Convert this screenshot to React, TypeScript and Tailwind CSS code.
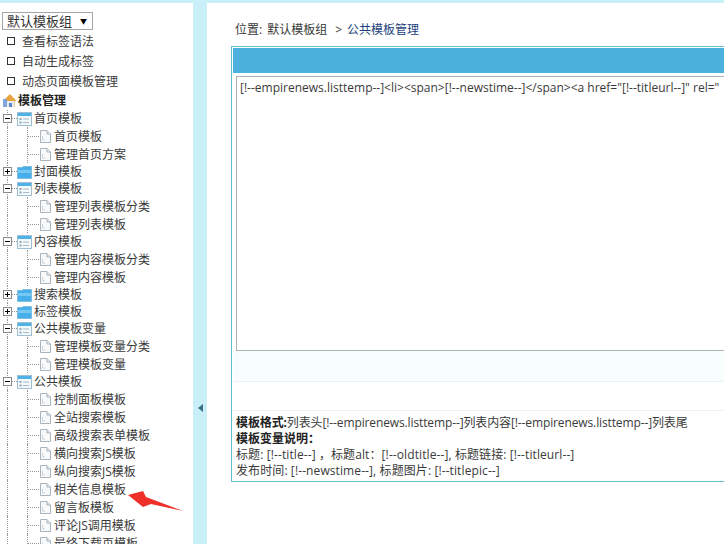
const font = { fontFamily: '"Open Sans", "Noto Sans CJK SC", sans-serif' }

function PageIcon() {
  return (
    <svg width="13" height="15" viewBox="0 0 13 15" className="shrink-0">
      <path d="M1.5 1.5 H8 L11.5 5 V13.5 H1.5 Z" fill="#f7f9fb" stroke="#a9b4bd" />
      <path d="M8 1.5 V5 H11.5" fill="#e2e8ec" stroke="#a9b4bd" />
      <path d="M3.5 7 V11 H6" fill="none" stroke="#ccd4da" />
    </svg>
  )
}

function OpenFolder() {
  return (
    <svg width="15" height="14" viewBox="0 0 15 14" className="shrink-0">
      <rect x="0.5" y="0.5" width="14" height="13" fill="#f4f9fc" stroke="#9fc0d4" />
      <rect x="1" y="1" width="13" height="3" fill="#4fb2e6" />
      <rect x="2.5" y="6" width="2" height="2" fill="#8fa6b8" />
      <rect x="2.5" y="9.5" width="2" height="2" fill="#8fa6b8" />
      <path d="M6 7 H12 M6 10.5 H12" stroke="#a9bac6" />
    </svg>
  )
}

function ClosedFolder() {
  return (
    <svg width="15" height="14" viewBox="0 0 15 14" className="shrink-0">
      <path d="M0.5 2.5 V13.5 H14.5 V1.5 H6 L5 2.5 Z" fill="#46aeea" stroke="#7fbde0" />
      <rect x="1" y="5" width="13" height="3" fill="#75c8f2" />
    </svg>
  )
}

function HomeIcon() {
  return (
    <svg width="15" height="15" viewBox="0 0 15 15" className="shrink-0">
      <path d="M8 1 L14.5 8 H12.5 V14 H3 V8 H1 Z" fill="#e8a33c" />
      <rect x="1" y="6" width="4" height="8" fill="#7fa6d8" />
      <rect x="5" y="8" width="7" height="6" fill="#e6ecf3" />
      <rect x="7" y="10" width="3" height="4" fill="#5a86c4" />
    </svg>
  )
}

function Expander({ open }: { open: boolean }) {
  return (
    <span className="relative w-[9px] h-[9px] border border-[#8a8a8a] bg-white shrink-0 z-10">
      <span className="absolute left-[1px] top-[3px] w-[5px] h-px bg-black" />
      {!open && <span className="absolute left-[3px] top-[1px] w-px h-[5px] bg-black" />}
    </span>
  )
}

function GroupRow({ label, open }: { label: string; open: boolean }) {
  return (
    <div className="flex items-center h-[17px]">
      <div className="relative flex items-center w-[17px] h-full pl-[3px] shrink-0">
        <span className="absolute left-[7px] top-0 bottom-0 border-l border-dotted border-[#999]" />
        <span className="absolute left-[12px] top-[8px] w-[5px] border-t border-dotted border-[#999]" />
        <Expander open={open} />
      </div>
      <span className="shrink-0 w-[17px]">{open ? <OpenFolder /> : <ClosedFolder />}</span>
      <span className="text-[#3a3a3a]">{label}</span>
    </div>
  )
}

function LeafRow({ label }: { label: string }) {
  return (
    <div className="flex items-center h-[18px]">
      <div className="relative w-[27px] h-full border-l border-dotted border-[#999] ml-[7px] shrink-0" />
      <div className="relative w-[12px] h-full shrink-0 -ml-[7px] mr-[7px]">
        <span className="absolute left-0 top-0 h-full border-l border-dotted border-[#999]" />
        <span className="absolute left-0 top-[9px] w-[12px] border-t border-dotted border-[#999]" />
      </div>
      <span className="-ml-[7px] w-[15px] shrink-0">
        <PageIcon />
      </span>
      <span className="text-[#3a3a3a] whitespace-nowrap">{label}</span>
    </div>
  )
}

const tree: { label: string; open: boolean; items: string[] }[] = [
  { label: '首页模板', open: true, items: ['首页模板', '管理首页方案'] },
  { label: '封面模板', open: false, items: [] },
  { label: '列表模板', open: true, items: ['管理列表模板分类', '管理列表模板'] },
  { label: '内容模板', open: true, items: ['管理内容模板分类', '管理内容模板'] },
  { label: '搜索模板', open: false, items: [] },
  { label: '标签模板', open: false, items: [] },
  { label: '公共模板变量', open: true, items: ['管理模板变量分类', '管理模板变量'] },
  {
    label: '公共模板',
    open: true,
    items: [
      '控制面板模板',
      '全站搜索模板',
      '高级搜索表单模板',
      '横向搜索JS模板',
      '纵向搜索JS模板',
      '相关信息模板',
      '留言板模板',
      '评论JS调用模板',
      '最终下载页模板',
    ],
  },
]

const links = ['查看标签语法', '自动生成标签', '动态页面模板管理']

export default function App() {
  return (
    <div
      className="relative w-[724px] h-[544px] overflow-hidden flex bg-white text-[12px] leading-[17px] text-[#3a3a3a]"
      style={font}
    >
      {/* Sidebar */}
      <div className="w-[193px] shrink-0 border-t-[3px] border-[#c9eff9] overflow-hidden">
        <div className="pl-[2px] pt-[9px]">
          <div className="flex items-center justify-between w-[91px] h-[18px] border border-[#a5a5a5] pl-[4px] pr-[5px] text-[13px] text-[#333]">
            <span>默认模板组</span>
            <span className="text-[7px] text-black">▼</span>
          </div>
        </div>
        <div className="flex flex-col mt-[1px]">
          {links.map((l) => (
            <div key={l} className="flex items-center h-[20px] pl-[7px]">
              <span className="w-[8px] h-[8px] border border-[#333] mr-[7px] shrink-0" />
              <span>{l}</span>
            </div>
          ))}
        </div>
        <div className="flex items-center h-[18px] pl-[2px] font-bold text-[#222]">
          <HomeIcon />
          <span className="ml-[1px]">模板管理</span>
        </div>
        <div className="flex flex-col mt-[1px]">
          {tree.map((g) => (
            <div key={g.label} className="flex flex-col">
              <GroupRow label={g.label} open={g.open} />
              {g.items.map((item) => (
                <LeafRow key={item} label={item} />
              ))}
            </div>
          ))}
        </div>
      </div>

      {/* Collapse strip */}
      <div className="w-[14px] shrink-0 bg-[#c9eff9] flex items-center justify-center pt-[272px]">
        <span className="w-0 h-0 border-y-[4px] border-y-transparent border-r-[5px] border-r-[#3f6f8a]" />
      </div>

      {/* Main */}
      <div className="flex-1 min-w-0 border-t-[3px] border-[#c9eff9] overflow-hidden">
        <div className="pl-[28px] pt-[18px] h-[43px] whitespace-nowrap">
          <span>位置:</span>
          <span className="ml-[5px]">默认模板组</span>
          <span className="ml-[8px]">&gt;</span>
          <span className="ml-[5px] text-[#1c3f7c]">公共模板管理</span>
        </div>
        <div className="ml-[24px] w-[600px] h-[436px] border border-[#5fc0d2] p-px flex flex-col">
          <div className="h-[25px] bg-[#4cb1dd] shrink-0" />
          <div className="px-[3px] pt-[3px] bg-white shrink-0">
            <div className="h-[275px] border border-[#aab2b6] pl-[3px] pt-[2px] whitespace-nowrap overflow-hidden">
              {'[!--empirenews.listtemp--]<li><span>[!--newstime--]</span><a href="[!--titleurl--]" rel="'}
            </div>
          </div>
          <div className="h-[31px] bg-[#f8fdfd] border-b border-[#e9f3f3] shrink-0" />
          <div className="h-[29px] bg-white border-b border-[#e9f3f3] shrink-0" />
          <div className="pl-[3px] pt-[4px] leading-[16px] whitespace-nowrap">
            <div className="tracking-[-0.12px]">
              <b className="text-[#222]">模板格式:</b>列表头[!--empirenews.listtemp--]列表内容[!--empirenews.listtemp--]列表尾
            </div>
            <div>
              <b className="text-[#222]">模板变量说明：</b>
            </div>
            <div className="tracking-[0.1px]">标题: [!--title--] ，标题alt：[!--oldtitle--], 标题链接: [!--titleurl--]</div>
            <div className="tracking-[0.1px]">发布时间: [!--newstime--], 标题图片: [!--titlepic--]</div>
          </div>
        </div>
      </div>

      {/* Annotation arrow */}
      <svg width="60" height="26" viewBox="0 0 60 26" className="absolute left-[127px] top-[489px]">
        <path d="M1 6 L16 2 L19 8 L56 22 L24 15 L16 18 Z" fill="#ee2f2a" />
      </svg>
    </div>
  )
}
